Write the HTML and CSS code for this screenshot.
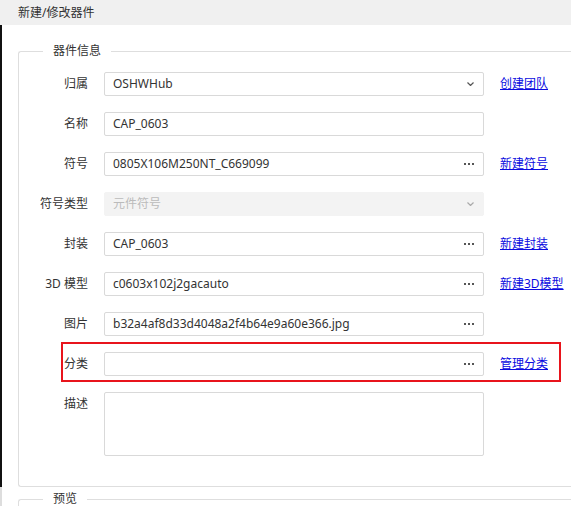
FILE: index.html
```html
<!DOCTYPE html>
<html lang="zh-CN">
<head>
<meta charset="utf-8">
<title>新建/修改器件</title>
<link rel="stylesheet" href="styles.css">
</head>
<body>
<div class="titlebar">新建/修改器件</div>
<div class="main">
  <fieldset class="group">
    <legend>器件信息</legend>
    <div class="form">
      <div class="row">
        <span class="label">归属</span>
        <div class="field"><span class="value">OSHWHub</span>
          <svg class="chev" width="7" height="4" viewBox="0 0 7 4"><path d="M0.5 0.5 L3.5 3.5 L6.5 0.5" fill="none" stroke="#555" stroke-width="1.2"/></svg>
        </div>
        <a class="link" href="#">创建团队</a>
      </div>
      <div class="row">
        <span class="label">名称</span>
        <div class="field"><span class="value">CAP_0603</span></div>
      </div>
      <div class="row">
        <span class="label">符号</span>
        <div class="field"><span class="value">0805X106M250NT_C669099</span>
          <svg class="dots" width="10" height="2" viewBox="0 0 10 2"><rect x="0" y="0" width="2" height="2" fill="#555"/><rect x="4" y="0" width="2" height="2" fill="#555"/><rect x="8" y="0" width="2" height="2" fill="#555"/></svg>
        </div>
        <a class="link" href="#">新建符号</a>
      </div>
      <div class="row">
        <span class="label">符号类型</span>
        <div class="field disabled"><span class="value">元件符号</span>
          <svg class="chev" width="7" height="4" viewBox="0 0 7 4"><path d="M0.5 0.5 L3.5 3.5 L6.5 0.5" fill="none" stroke="#aaa" stroke-width="1.2"/></svg>
        </div>
      </div>
      <div class="row">
        <span class="label">封装</span>
        <div class="field"><span class="value">CAP_0603</span>
          <svg class="dots" width="10" height="2" viewBox="0 0 10 2"><rect x="0" y="0" width="2" height="2" fill="#555"/><rect x="4" y="0" width="2" height="2" fill="#555"/><rect x="8" y="0" width="2" height="2" fill="#555"/></svg>
        </div>
        <a class="link" href="#">新建封装</a>
      </div>
      <div class="row">
        <span class="label">3D 模型</span>
        <div class="field"><span class="value">c0603x102j2gacauto</span>
          <svg class="dots" width="10" height="2" viewBox="0 0 10 2"><rect x="0" y="0" width="2" height="2" fill="#555"/><rect x="4" y="0" width="2" height="2" fill="#555"/><rect x="8" y="0" width="2" height="2" fill="#555"/></svg>
        </div>
        <a class="link" href="#">新建3D模型</a>
      </div>
      <div class="row">
        <span class="label">图片</span>
        <div class="field"><span class="value">b32a4af8d33d4048a2f4b64e9a60e366.jpg</span>
          <svg class="dots" width="10" height="2" viewBox="0 0 10 2"><rect x="0" y="0" width="2" height="2" fill="#555"/><rect x="4" y="0" width="2" height="2" fill="#555"/><rect x="8" y="0" width="2" height="2" fill="#555"/></svg>
        </div>
      </div>
      <div class="row highlight">
        <span class="label">分类</span>
        <div class="field"><span class="value"></span>
          <svg class="dots" width="10" height="2" viewBox="0 0 10 2"><rect x="0" y="0" width="2" height="2" fill="#555"/><rect x="4" y="0" width="2" height="2" fill="#555"/><rect x="8" y="0" width="2" height="2" fill="#555"/></svg>
        </div>
        <a class="link" href="#">管理分类</a>
      </div>
      <div class="row tall">
        <span class="label">描述</span>
        <div class="field area"></div>
      </div>
    </div>
  </fieldset>
</div>
<div class="preview">
  <fieldset class="group">
    <legend>预览</legend>
  </fieldset>
</div>
</body>
</html>
```

FILE: styles.css
```css
html, body {
  margin: 0;
  padding: 0;
  background: #ffffff;
  overflow: hidden;
}
body {
  font-family: "Noto Sans", "Noto Sans CJK SC", sans-serif;
  font-size: 12px;
  color: #333333;
  width: 571px;
  height: 506px;
}
.titlebar {
  height: 25px;
  line-height: 25px;
  background: #f0f0f0;
  padding-left: 18px;
  color: #333333;
}
.main {
  border-left: 2px solid #111111;
  padding-top: 18px;
}
.group {
  margin: 0 0 0 16px;
  box-sizing: border-box;
  border: 1px solid #dedede;
  border-right: 0;
  border-radius: 3px 0 0 3px;
  padding: 13px 0 30px 0;
  min-inline-size: 0;
}
.group legend {
  margin-left: 24px;
  padding: 0 10px;
  line-height: 16px;
  height: 16px;
  color: #333333;
}
.form {
  display: flex;
  flex-direction: column;
  gap: 16px;
}
.row {
  display: grid;
  grid-template-columns: 69px 380px auto;
  column-gap: 16px;
  height: 24px;
  align-items: center;
}
.row.tall {
  height: 64px;
  align-items: start;
}
.label {
  text-align: right;
  line-height: 24px;
  white-space: nowrap;
}
.field {
  box-sizing: border-box;
  height: 24px;
  border: 1px solid #d9d9d9;
  border-radius: 2px;
  padding: 0 9px 0 8px;
  display: flex;
  align-items: center;
  justify-content: space-between;
  background: #ffffff;
}
.field .value {
  line-height: 22px;
  white-space: nowrap;
  color: #333333;
}
.field.disabled {
  background: #f3f3f3;
  border-color: #f3f3f3;
}
.field.disabled .value {
  color: #bbbbbb;
}
.field.area {
  height: 64px;
}
.chev, .dots {
  display: block;
  flex: none;
}
.link {
  color: #0a0ae0;
  text-decoration: underline;
  line-height: 24px;
  white-space: nowrap;
}
.row.highlight {
  position: relative;
}
.row.highlight::after {
  content: "";
  position: absolute;
  left: 42px;
  top: -10px;
  width: 500px;
  height: 40px;
  box-sizing: border-box;
  border: 2px solid #e8141c;
  pointer-events: none;
}
.preview {
  border-left: 2px solid #dddddd;
  padding-top: 4px;
  height: 40px;
}
.preview .group {
  padding: 0;
  height: 40px;
}
```
